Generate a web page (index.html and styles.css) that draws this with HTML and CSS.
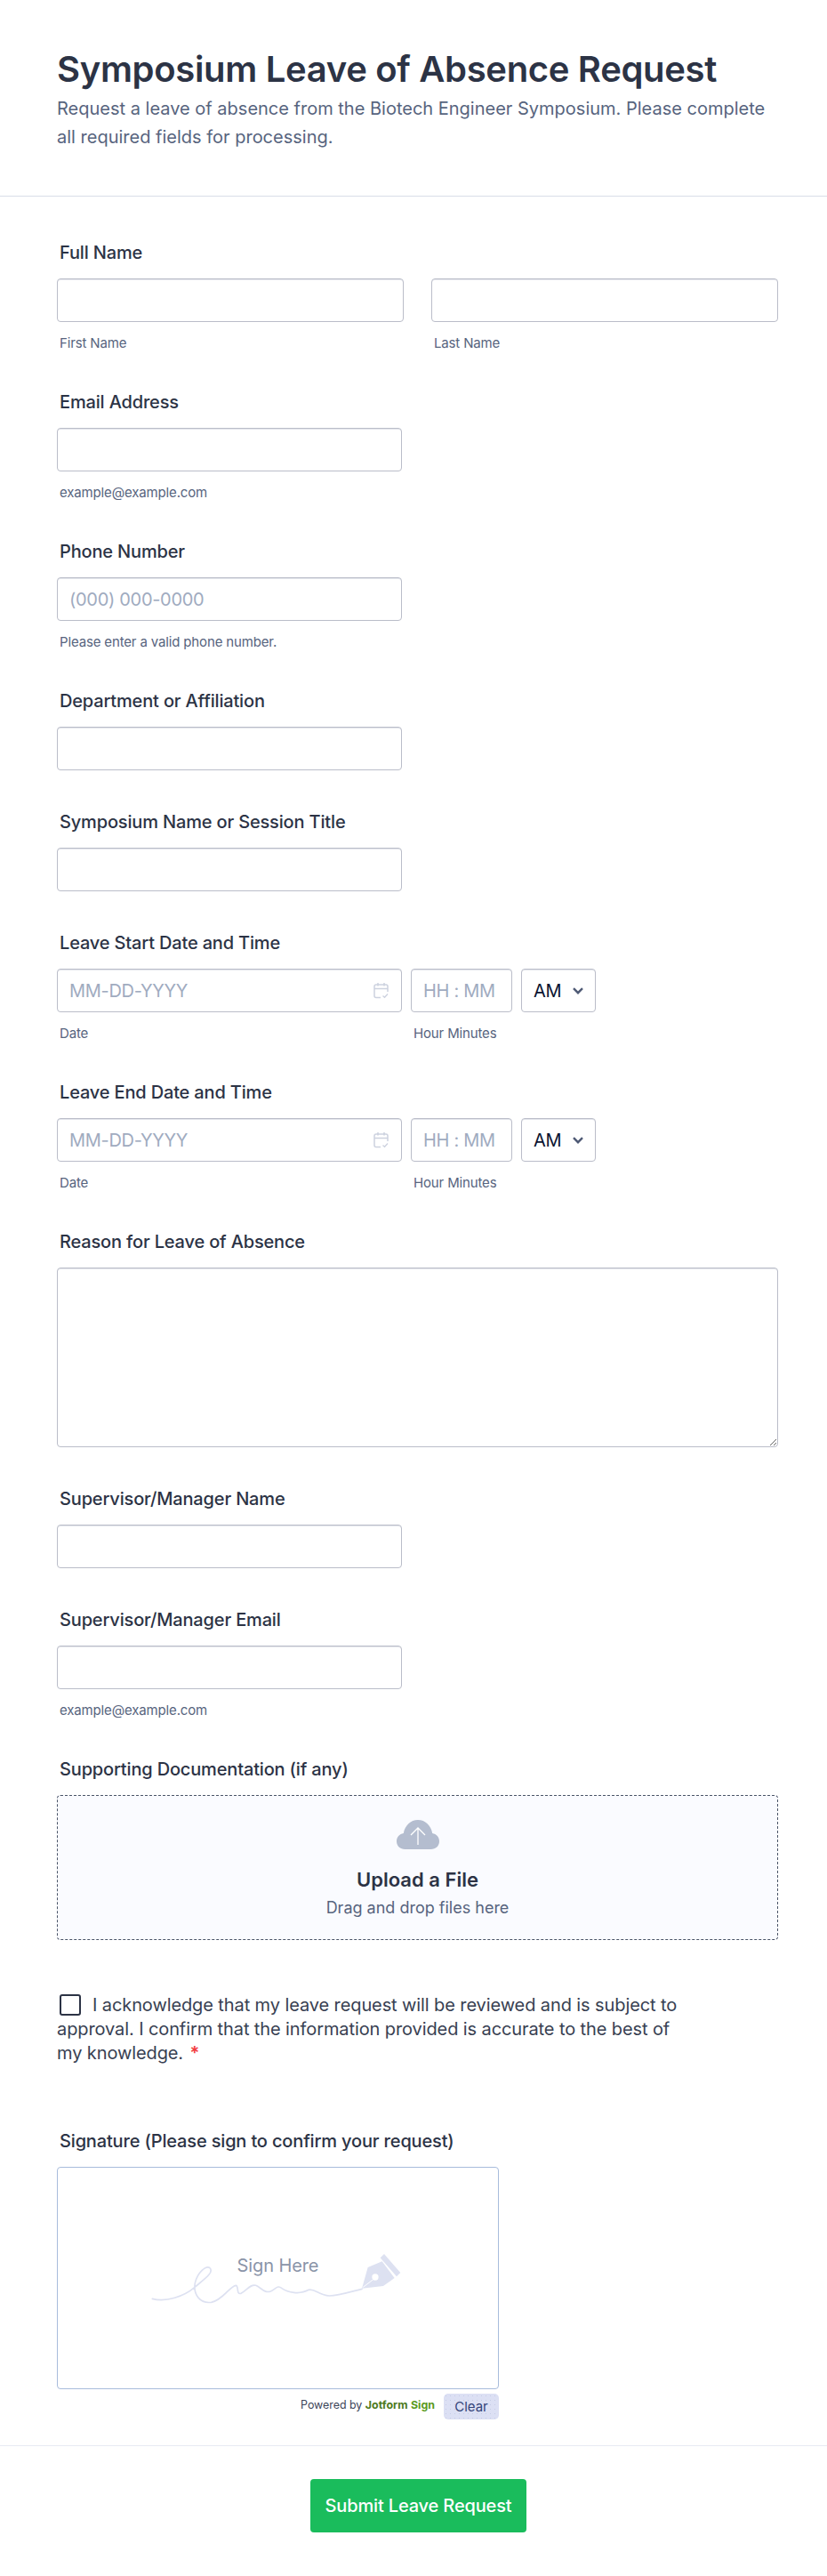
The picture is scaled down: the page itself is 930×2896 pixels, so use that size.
FILE: index.html
```html
<!DOCTYPE html>
<html lang="en">
<head>
<meta charset="utf-8">
<title>Symposium Leave of Absence Request</title>
<link rel="stylesheet" href="styles.css">
</head>
<body>
<form class="form">
  <header class="head">
    <h1 class="title">Symposium Leave of Absence Request</h1>
    <p class="desc">Request a leave of absence from the Biotech Engineer Symposium. Please complete all required fields for processing.</p>
  </header>
  <div class="fields">
    <div class="field">
      <div class="label">Full Name</div>
      <div class="row-2">
        <div class="col"><input class="input" type="text"><div class="sub">First Name</div></div>
        <div class="col"><input class="input" type="text"><div class="sub">Last Name</div></div>
      </div>
    </div>
    <div class="field">
      <div class="label">Email Address</div>
      <input class="input narrow" type="text">
      <div class="sub">example@example.com</div>
    </div>
    <div class="field">
      <div class="label">Phone Number</div>
      <input class="input narrow" type="text" placeholder="(000) 000-0000">
      <div class="sub">Please enter a valid phone number.</div>
    </div>
    <div class="field">
      <div class="label">Department or Affiliation</div>
      <input class="input narrow" type="text">
    </div>
    <div class="field">
      <div class="label">Symposium Name or Session Title</div>
      <input class="input narrow" type="text">
    </div>
    <div class="field">
      <div class="label">Leave Start Date and Time</div>
      <div class="dt">
        <div class="dt-date">
          <div class="input fake"><span class="ph">MM-DD-YYYY</span>
            <svg class="cal" viewBox="0 0 17 19" fill="none" stroke="#CDD2DF" stroke-width="1.5"><path d="M8 17.500H3a2 2 0 0 1-2-2V5a2 2 0 0 1 2-2h11a2 2 0 0 1 2 2v6M1 7.500h15M5 1v3.500M12 1v3.500"/><path d="M10.500 15.500l2 1.800 3.500-3.800" stroke-width="1.300"/></svg>
          </div>
          <div class="sub">Date</div>
        </div>
        <div class="dt-time"><div class="input fake"><span class="ph">HH : MM</span></div><div class="sub">Hour Minutes</div></div>
        <div class="input fake ampm"><span>AM</span><svg class="chev" viewBox="0 0 12 8" fill="none" stroke="#4F5A75" stroke-width="2.400"><path d="M1 1.200 6 6.200l5-5"/></svg></div>
      </div>
    </div>
    <div class="field">
      <div class="label">Leave End Date and Time</div>
      <div class="dt">
        <div class="dt-date">
          <div class="input fake"><span class="ph">MM-DD-YYYY</span>
            <svg class="cal" viewBox="0 0 17 19" fill="none" stroke="#CDD2DF" stroke-width="1.5"><path d="M8 17.500H3a2 2 0 0 1-2-2V5a2 2 0 0 1 2-2h11a2 2 0 0 1 2 2v6M1 7.500h15M5 1v3.500M12 1v3.500"/><path d="M10.500 15.500l2 1.800 3.500-3.800" stroke-width="1.300"/></svg>
          </div>
          <div class="sub">Date</div>
        </div>
        <div class="dt-time"><div class="input fake"><span class="ph">HH : MM</span></div><div class="sub">Hour Minutes</div></div>
        <div class="input fake ampm"><span>AM</span><svg class="chev" viewBox="0 0 12 8" fill="none" stroke="#4F5A75" stroke-width="2.400"><path d="M1 1.200 6 6.200l5-5"/></svg></div>
      </div>
    </div>
    <div class="field">
      <div class="label">Reason for Leave of Absence</div>
      <textarea class="area"></textarea>
    </div>
    <div class="field">
      <div class="label">Supervisor/Manager Name</div>
      <input class="input narrow" type="text">
    </div>
    <div class="field">
      <div class="label">Supervisor/Manager Email</div>
      <input class="input narrow" type="text">
      <div class="sub">example@example.com</div>
    </div>
    <div class="field f-upload">
      <div class="label">Supporting Documentation (if any)</div>
      <div class="upload">
        <svg class="cloud" viewBox="0 0 48 33"><path fill="#B4BDCF" d="M9.500 33C4 33 0 29.200 0 24c0-4.800 3.300-8.300 7.800-9.100C9.300 6.300 15.800 0 24 0s14.700 6.300 16.200 14.900C44.700 15.700 48 19.200 48 24c0 5.200-4 9-9.500 9z"/><path fill="none" stroke="#fff" stroke-width="1.300" d="M24 28V9M16 17l8-8 8 8"/></svg>
        <div class="up-title">Upload a File</div>
        <div class="up-sub">Drag and drop files here</div>
      </div>
    </div>
    <div class="field f-check">
      <p class="ack"><span class="box"></span>I acknowledge that my leave request will be reviewed and is subject to approval. I confirm that the information provided is accurate to the best of my knowledge. <span class="req">*</span></p>
    </div>
    <div class="field f-sign">
      <div class="label">Signature (Please sign to confirm your request)</div>
      <div class="canvas">
        <svg class="swirl" viewBox="50 150 860 190" fill="none"><path stroke="#DDE1F1" stroke-width="5" stroke-linecap="round" d="M63 313C110 325 170 305 205 275C240 245 270 225 258 210C245 198 215 225 207 260C200 300 225 330 262 325C300 318 325 270 345 268C355 268 345 300 362 295C380 285 395 262 412 268C430 275 440 295 462 288C480 280 485 265 500 278C520 292 560 300 590 283C610 278 625 300 660 303C690 303 730 290 770 280"/><path fill="#DDE1F1" fill-rule="evenodd" d="M770 278L790 207L838 187L880 243L842 270ZM804 240a11 11 0 1 0 22 0a11 11 0 1 0-22 0Z"/><path stroke="#fff" stroke-width="3" d="M774 274L808 248"/><path fill="#DDE1F1" d="M832 175L845 162L900 225L887 238Z"/></svg>
        <span class="sign-here">Sign Here</span>
      </div>
      <div class="sign-foot">
        <span class="powered">Powered by <b class="jf">Jotform</b> <b class="sg">Sign</b></span>
        <span class="clear">Clear</span>
      </div>
    </div>
  </div>
  <footer class="foot"><button class="submit" type="button">Submit Leave Request</button></footer>
</form>
</body>
</html>
```
FILE: styles.css
```css
* { box-sizing: border-box; }
html, body { margin: 0; padding: 0; background: #fff; }
body { font-family: Inter, "Liberation Sans", sans-serif; color: #2C3345; overflow: hidden; }
.form { width: 930px; height: 2896px; }
.head { height: 221px; padding: 50px 64px 0; border-bottom: 1px solid #D9DDE8; }
.title { margin: 0; font-size: 40px; line-height: 56px; font-weight: 600; color: #2C3345; letter-spacing: -0.32px; }
.desc { margin: 0; font-size: 20px; line-height: 32px; color: #57647E; width: 810px; }
.fields { padding: 49px 55px 0 64px; }
.field { display: flex; flex-direction: column; margin-bottom: 44px; }
.label { font-size: 20px; line-height: 28px; font-weight: 500; color: #2C3345; padding-left: 3px; margin-bottom: 15px; height: 28px; letter-spacing: -0.16px; }
.row-2 { display: grid; grid-template-columns: 390px 390px; gap: 31px; }
.col { display: flex; flex-direction: column; }
.input { display: block; height: 49px; width: 100%; border: 1px solid #BABDC9; border-radius: 4px; background: #fff; font: 20px Inter, sans-serif; letter-spacing: -0.3px; padding: 0 13px; box-shadow: inset 0 1px 0 #E3E5EB; }
.input::placeholder, .ph { color: #A0ABBF; }
.narrow { width: 388px; }
.sub { font-size: 15px; line-height: 20px; height: 18px; color: #57647E; padding-left: 3px; margin-top: 14px; letter-spacing: -0.15px; }
.dt { display: flex; gap: 10px; }
.dt-date { width: 388px; }
.dt-time { width: 114px; }
.fake { display: flex; align-items: center; justify-content: space-between; color: #0A1551; }
.cal { width: 17px; height: 19px; margin-right: 1px; }
.ampm { width: 84px; padding: 0 13px; color: #0A1330; }
.chev { width: 12px; height: 8px; }
.area { display: block; width: 100%; height: 202px; border: 1px solid #BABDC9; border-radius: 4px; box-shadow: inset 0 1px 0 #E3E5EB; background: #fff; }
.f-upload { margin-bottom: 60px; }
.upload { height: 163px; border: 1px dashed #4A5468; border-radius: 4px; background: #FAFBFF; display: flex; flex-direction: column; align-items: center; }
.cloud { width: 48px; height: 33px; margin-top: 27px; }
.up-title { font-size: 22px; line-height: 30px; font-weight: 600; margin-top: 19px; color: #2C3345; }
.up-sub { font-size: 18px; line-height: 24px; color: #57647E; margin-top: 5px; }
.f-check { margin-bottom: 71px; }
.ack { margin: 0; width: 710px; font-size: 20px; line-height: 27px; color: #383F52; letter-spacing: -0.1px; }
.box { display: inline-block; width: 24px; height: 24px; border: 2px solid #2C3345; border-radius: 3px; margin: 0 13px 0 3px; vertical-align: -5px; }
.req { color: #F23A3C; font-weight: 600; margin-left: 2px; }
.canvas { width: 497px; height: 250px; border: 1px solid #A8BCDC; border-radius: 4px; position: relative; display: flex; align-items: center; justify-content: center; }
.swirl { position: absolute; left: 101.670px; top: 93px; width: 286.670px; height: 63.330px; }
.sign-here { position: relative; font-size: 20px; line-height: 28px; color: #8A94A8; top: -14px; letter-spacing: -0.1px; }
.f-sign { margin-bottom: 29px; }
.sign-foot { width: 497px; display: flex; justify-content: flex-end; align-items: flex-start; gap: 10px; margin-top: 5px; }
.powered { font-size: 12.400px; line-height: 18px; margin-top: 4px; color: #3C4458; }
.jf { color: #4E7A1C; font-weight: 700; }
.sg { color: #5A9A20; font-weight: 700; }
.clear { width: 62px; height: 29px; background: #DCE0F4 radial-gradient(#C6CCE6 0.6px, transparent 0.8px) 0 0 / 5px 5px; border-radius: 5px; font-size: 15px; line-height: 29px; text-align: center; color: #34447A; }
.foot { border-top: 1px solid #E6EAF3; padding-top: 37px; display: flex; justify-content: center; }
.submit { width: 243px; height: 60px; margin-left: 11px; background: #1ABC5C; border: 0; border-radius: 4px; color: #fff; font: 500 20px Inter, sans-serif; letter-spacing: -0.15px; }
```
